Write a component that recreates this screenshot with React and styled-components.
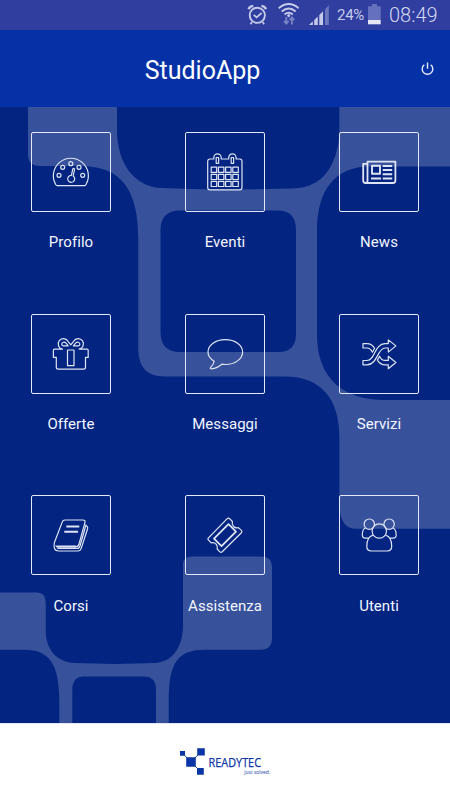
import React from 'react';
import styled, { createGlobalStyle } from 'styled-components';

const GlobalStyle = createGlobalStyle`
  * { box-sizing: border-box; }
  body { margin: 0; background: #fff; font-family: Roboto, "Noto Sans", sans-serif; }
`;

const Screen = styled.div`
  width: 450px;
  height: 800px;
  display: flex;
  flex-direction: column;
  overflow: hidden;
  color: #f3f5ff;
`;

const StatusBar = styled.div`
  height: 30px;
  flex: none;
  background: #303e9f;
  display: flex;
  align-items: center;
  justify-content: flex-end;
  padding-right: 12px;
  color: #c5cae9;
`;

const StatusIcon = styled.svg`
  flex: none;
  width: ${(p) => p.$w}px;
  height: 30px;
  margin-right: ${(p) => p.$gap}px;
`;

const BatteryLevel = styled.span`
  font-size: 15px;
  line-height: 31px;
  width: 27px;
  margin-right: 4px;
  letter-spacing: -0.3px;
  white-space: nowrap;
`;

const Clock = styled.span`
  font-size: 20px;
  font-weight: 300;
  line-height: 31px;
  width: 49px;
  white-space: nowrap;
  letter-spacing: 0;
  color: #d3d7ef;
`;

const Header = styled.header`
  height: 77px;
  flex: none;
  background: #0531a7;
  display: grid;
  grid-template-columns: 46px 1fr 46px;
  align-items: center;
`;

const Title = styled.h1`
  grid-column: 2;
  margin: 5px 0 0;
  padding-right: 45px;
  text-align: center;
  font-size: 25px;
  font-weight: 400;
  line-height: 30px;
  letter-spacing: 0;
  color: #fff;
`;

const PowerButton = styled.button`
  width: 46px;
  height: 46px;
  padding: 0;
  border: 0;
  background: none;
  display: flex;
  align-items: center;
  justify-content: center;
`;

const Main = styled.main`
  position: relative;
  height: 616px;
  flex: none;
  background: #032581;
`;

const Pattern = styled.svg`
  position: absolute;
  inset: 0;
  width: 450px;
  height: 616px;
`;

const Menu = styled.nav`
  position: relative;
  display: grid;
  grid-template-columns: repeat(3, 154px);
  grid-auto-rows: 181.7px;
  justify-content: center;
  padding-top: 25px;
`;

const MenuItem = styled.a`
  display: flex;
  flex-direction: column;
  align-items: center;
`;

const Tile = styled.span`
  width: 80px;
  height: 80px;
  border: 1px solid #e4e8f6;
  border-radius: 2px;
  display: block;
`;

const TileIcon = styled.svg`
  display: block;
  width: 78px;
  height: 78px;
  fill: none;
  stroke: #dfe4f4;
  stroke-width: 1.2;
  stroke-linejoin: round;
`;

const Label = styled.span`
  margin-top: 20.2px;
  font-size: 15px;
  line-height: 20px;
  letter-spacing: 0.05px;
  white-space: nowrap;
`;

const Footer = styled.footer`
  flex: 1;
  background: #fff;
  border-top: 1px solid #e3e6f3;
  display: flex;
  justify-content: center;
`;

const Logo = styled.svg`
  width: 100px;
  height: 76px;
  font-family: "Open Sans", "Noto Sans", sans-serif;
  fill: #0a35a6;
`;

const icons = {
  gauge: (
    <>
      <path d="M26.2 53.7Q25.4 53.7 24.7 52.5A17.5 17.5 0 1 1 55 52.5Q54.3 53.7 53.5 53.7Z" />
      <circle cx="28" cy="43.3" r="2" />
      <circle cx="31.7" cy="35.3" r="2" />
      <circle cx="39.8" cy="31.7" r="2" />
      <circle cx="48" cy="35.3" r="2" />
      <circle cx="51.7" cy="43.3" r="2" />
      <path d="M40.4 43.3L41.8 37Q42.5 35.6 43.6 37L42.2 43.9A3.5 3.5 0 1 1 40.4 43.3Z" />
    </>
  ),
  calendar: (
    <>
      <path d="M25 27H28.8V25.6A3.7 3.7 0 0 1 36.2 25.6V27H43.7V25.6A3.7 3.7 0 0 1 51.1 25.6V27H54.7Q57 27 57 29.3V55.5Q57 57.9 54.7 57.9H25Q22.7 57.9 22.7 55.5V29.3Q22.7 27 25 27Z" />
      <path d="M31.2 25.5H33.6V31.3H31.2ZM46.2 25.5H48.6V31.3H46.2Z" />
      {[35.2, 42.3, 49.3].map((y) =>
        [26.2, 33.4, 40.6, 47.8].map((x) => (
          <rect key={`${x}-${y}`} x={x} y={y} width="5.5" height="5.2" />
        )),
      )}
    </>
  ),
  news: (
    <>
      <path strokeWidth="1.8" d="M28.5 29.7H56.4V48.5Q56.4 51 54 51H26.5Q24.2 51 24.2 48.5V31.8H28.5ZM28.5 31.8V48.5Q28.5 51 26.5 51" />
      <path strokeWidth="1.9" d="M33 33.8H41V41.8H33Z" />
      <path strokeWidth="2" d="M43.7 34H53.2M43.7 38.1H53.2M43.7 42.2H53.2M32 46.4H42M43.7 46.4H53.2" />
    </>
  ),
  gift: (
    <>
      <path d="M23.4 35.2H31.5A5.3 5.3 0 1 1 37 27.3L39.8 30.8L42.6 27.3A5.3 5.3 0 1 1 48.1 35.2H56.2Q57.2 35.2 57.2 36.2V43.4H54.5V53.2Q54.5 55.1 52.5 55.1H27.3Q25.3 55.1 25.3 53.2V43.4H22.4V36.2Q22.4 35.2 23.4 35.2Z" />
      <path d="M36.5 36H43V51.7H36.5ZM37.2 31.8L34.8 28.9C33.3 27.2 30.8 28.4 30.8 30.2C30.8 32 32.4 32 33.4 31.9ZM42.4 31.8L44.8 28.9C46.3 27.2 48.8 28.4 48.8 30.2C48.8 32 47.2 32 46.2 31.9Z" />
    </>
  ),
  comment: (
    <path d="M40.3 25.6C50 25.6 57.6 31 57.6 38C57.6 45 50 50.5 40.3 50.5Q38.5 50.5 36.7 50.2C34 52.7 30.5 54.4 26.5 54.9Q25 55 25.3 53.8C26.8 52.2 28.8 50.4 29.2 47.2C25.3 45 23 41.7 23 38C23 31 30.6 25.6 40.3 25.6Z" />
  ),
  shuffle: (
    <>
      <path d="M24 46.5H28C36 46.5 35.5 29.6 46 29.6H49.3V25.9L56.9 31.9L49.3 38.1V34H46C38.5 34 38.5 50.8 28 50.8H24Z" />
      <path d="M24 29.6H28C31.5 29.6 33.8 31.3 35.6 34.3L33.4 38.2C32 35.2 30.8 34 28 34H24Z" />
      <path d="M40.5 42.2C42 45.2 43.2 46.4 46 46.4H49.3V42.3L56.9 48.5L49.3 54.7V50.8H46C42.3 50.8 40.2 49 38.4 46.1Z" />
    </>
  ),
  book: (
    <>
      <path d="M34 25H52Q54.6 25 53.9 27.6L48 49Q47.3 51.8 44.8 51.8H26.3Q24.8 51.8 25.2 50.4M34 25Q31.8 25 31.1 27.4L23.4 47.5Q21.7 56 27.6 56H46.7Q49.4 56 50.2 53.4L56.5 34Q57.3 31.3 54.5 30.5M26.3 53.5H46Q48.2 53.5 49 51L55.1 29.5" />
      <path strokeWidth="2" d="M35.3 31.6H48.3M33.3 36.7H47M26 51.6H45" />
    </>
  ),
  ticket: (
    <>
      <path d="M42.2 23.7Q43.4 22.6 44.6 23.7L47.4 26.5C46.4 30.7 49.3 33.5 53.4 32.6L56.4 35.4Q57.5 36.5 56.4 37.7L37.2 56.8Q36 57.9 34.9 56.8L32.2 54C33.1 49.9 30.3 47 26.2 47.8L23.5 45.1Q22.3 44 23.5 42.8Z" />
      <path strokeWidth="1.8" d="M43.5 29.2L51 36.7L36.5 51.2L29 43.7Z" />
    </>
  ),
  users: (
    <>
      <circle cx="30.3" cy="29.2" r="5.2" />
      <circle cx="50.1" cy="29.2" r="5.2" />
      <circle cx="40.3" cy="36" r="7.2" />
      <path d="M34 40.2C29.5 41.4 27.8 45.5 27.8 51.3Q27.8 56 32.3 56H48.1Q52.7 56 52.7 51.3C52.7 45.5 51 41.4 46.6 40.2M26.5 33C24.1 33.8 23.3 37 23.3 40Q23.3 43.1 26.5 43.1H30M53.8 33C56.4 33.8 57.2 37 57.2 40Q57.2 43.1 54 43.1H50.6" />
    </>
  ),
};

const items = [
  ['Profilo', 'gauge'],
  ['Eventi', 'calendar'],
  ['News', 'news'],
  ['Offerte', 'gift'],
  ['Messaggi', 'comment'],
  ['Servizi', 'shuffle'],
  ['Corsi', 'book'],
  ['Assistenza', 'ticket'],
  ['Utenti', 'users'],
];

function StatusIcons() {
  return (
    <>
      <StatusIcon $w={20} $gap={10} viewBox="247 0 20 30" fill="none" stroke="currentColor">
        <circle cx="257.3" cy="15.3" r="7.6" strokeWidth="1.9" />
        <path strokeWidth="1.7" d="M253.7 14.8L256.6 17.4L261.6 13M252 22L250.5 24.3M262.6 22L264.1 24.3" />
        <path strokeWidth="2.4" d="M248.7 9.3Q249.4 6.2 253.2 5.9M265.9 9.3Q265.2 6.2 261.4 5.9" />
      </StatusIcon>
      <StatusIcon $w={22} $gap={9} viewBox="277 0 22 30" fill="none" stroke="currentColor">
        <path strokeWidth="1.9" d="M278.7 8.2Q288.7 0 298.7 8.2M281.7 11.4Q288.7 5.6 295.7 11.4M284.6 14.4Q288.7 11 292.8 14.4" />
        <circle cx="288.7" cy="15.6" r="1.1" fill="currentColor" />
        <path stroke="#7a84c4" strokeWidth="1.8" d="M286.3 17V24M284 21L286.3 23.7L288.6 21M291.9 24.5V17.3M289.6 20.2L291.9 17.5L294.2 20.2" />
      </StatusIcon>
      <StatusIcon $w={21} $gap={8} viewBox="308 0 21 30" fill="currentColor">
        <path d="M309 25L312.8 21.3V25ZM314.2 20V25H317.8V16.4ZM319.3 15V25H323V11.3Z" />
        <path fill="#6b76bd" d="M325 9.3V25H328.8V5.3Z" />
      </StatusIcon>
      <BatteryLevel>24%</BatteryLevel>
      <StatusIcon $w={13} $gap={8} viewBox="368 0 13 30">
        <path fill="#6571bd" d="M372 4H377V6.3H380.7V20H368V6.3H372Z" />
        <path fill="#e4e6f5" d="M368 20H380.7V24.3H368Z" />
      </StatusIcon>
      <Clock>08:49</Clock>
    </>
  );
}

export default function App() {
  return (
    <Screen>
      <GlobalStyle />
      <StatusBar>
        <StatusIcons />
      </StatusBar>
      <Header>
        <Title>StudioApp</Title>
        <PowerButton aria-label="Esci">
          <svg width="14" height="14" viewBox="0 0 14 14" fill="none" stroke="#e6eafa" strokeWidth="1.4">
            <path d="M4.3 2.8A5.3 5.3 0 1 0 10.7 2.8M7.5 0.5V6.7" />
          </svg>
        </PowerButton>
      </Header>
      <Main>
        <Pattern viewBox="0 107 450 616" fill="#37529b">
          <path
            fillRule="evenodd"
            d="M28 107V154Q28 166 40 166H80C122 166 138.3 190 138.3 240V350Q139 376.5 164 376.5H285C322 376.5 339.4 400 339.4 437V505Q340 528.7 356 528.7H450V400H385C343 400 317 378 317 335V231C317 190 335 166.5 370 166.5H450V107H339.3V135C337 165 323 188 293 188.4L240 189.5H210L160 188C134 186 117 163 117 130V107ZM180 210.5H278Q296 210.5 296 230V334Q296 352 278 352H180Q160.5 352 160.5 332V230Q160.5 210.5 180 210.5Z"
          />
          <path d="M0 592.6H37Q45.7 592.6 45.7 603V630C45.7 650 57 662.3 75 663L115 664L155 663C172 662 183 648 183 625V564Q183 556.5 192 556.5H262Q272 556.5 272 567V638Q272 649.7 261 649.7H205C178 649.7 169 662 168.7 700V723H156V690Q156 676.6 144 676.6H84Q72.3 676.6 72.3 690V723H59.3V700C59.3 664 49 649.7 25 649.7H0Z" />
        </Pattern>
        <Menu>
          {items.map(([label, icon]) => (
            <MenuItem key={label}>
              <Tile>
                <TileIcon viewBox="1 1 78 78">{icons[icon]}</TileIcon>
              </Tile>
              <Label>{label}</Label>
            </MenuItem>
          ))}
        </Menu>
      </Main>
      <Footer>
        <Logo viewBox="175 724 100 76">
          <path d="M180 751H185V755.7H180ZM197.2 748.2H204.8V755.4H197.2ZM186.2 757.3H195.8V766.8H186.2ZM197 768H203.8V774.7H197Z" />
          <path stroke="#0a35a6" strokeWidth="0.9" d="M184.5 755.2L187 758M198 754.8L195 758M195 766L198 769" />
          <text x="208.6" y="767" fontSize="12.3" stroke="#0a35a6" strokeWidth="0.25" textLength="52.4" lengthAdjust="spacingAndGlyphs">READYTEC</text>
          <text x="244.3" y="774" fontSize="5.6" textLength="25.7" lengthAdjust="spacingAndGlyphs">just solved.</text>
        </Logo>
      </Footer>
    </Screen>
  );
}
